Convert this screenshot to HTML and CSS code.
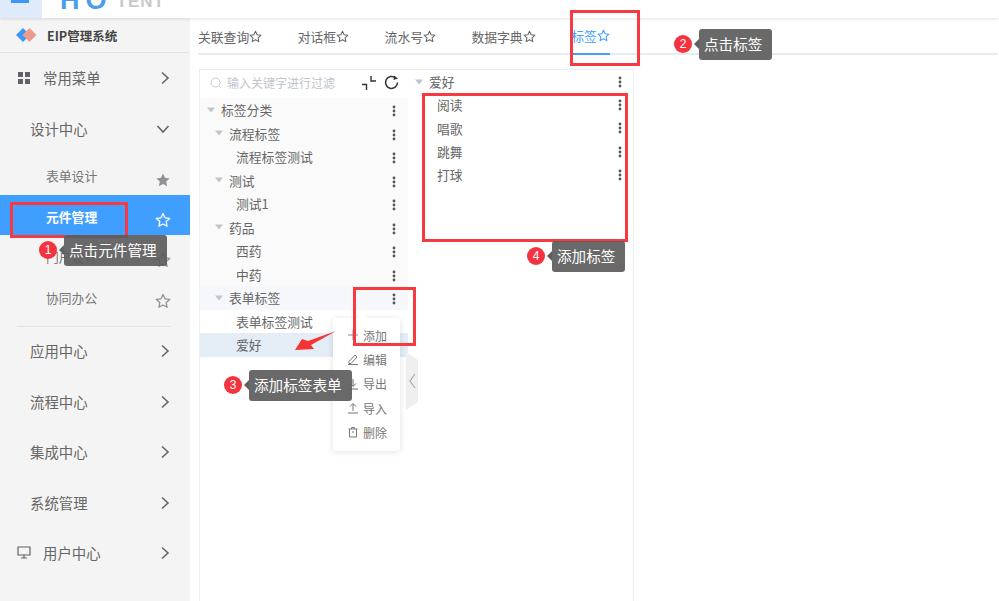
FILE: index.html
```html
<!DOCTYPE html>
<html lang="zh">
<head>
<meta charset="utf-8">
<title>EIP管理系统</title>
<link rel="stylesheet" href="styles.css">
</head>
<body>
<svg width="0" height="0" class="defs">
  <defs>
    <symbol id="dots" viewBox="0 0 4 12"><circle cx="2" cy="2" r="1.4"/><circle cx="2" cy="6" r="1.4"/><circle cx="2" cy="10" r="1.4"/></symbol>
    <symbol id="right" viewBox="0 0 10 14"><path d="M2 1.5 8 7l-6 5.500" fill="none" stroke="currentColor" stroke-width="1.600"/></symbol>
    <symbol id="down" viewBox="0 0 14 10"><path d="M1.500 2 7 8l5.500-6" fill="none" stroke="currentColor" stroke-width="1.600"/></symbol>
    <symbol id="star" viewBox="0 0 16 16"><path d="M8 1.500l2 4.300 4.700.6-3.500 3.200.9 4.700L8 12l-4.100 2.300.9-4.700L1.300 6.400 6 5.800z" fill="none" stroke="currentColor" stroke-width="1.300" stroke-linejoin="round"/></symbol>
    <symbol id="starfill" viewBox="0 0 16 16"><path d="M8 1.500l2 4.300 4.700.6-3.500 3.200.9 4.700L8 12l-4.100 2.300.9-4.700L1.300 6.400 6 5.800z" fill="currentColor"/></symbol>
    <symbol id="tri" viewBox="0 0 8 6"><path d="M0 .5h8L4 5.500z" fill="currentColor"/></symbol>
  </defs>
</svg>

<header class="topbar">
  <div class="burger"><span class="burger-line"></span></div>
  <div class="brand"><span class="brand-blue">HO</span><span class="brand-grey">TENT</span></div>
</header>

<div class="shell">
  <aside class="sidebar">
    <div class="sys">
      <svg class="sys-logo" width="22" height="16" viewBox="0 0 22 16"><path d="M8 1 15 8l-7 7-7-7z" fill="#3d98f5"/><path d="M14.500 1 21.500 8l-7 7-7-7z" fill="#ef9a8f"/></svg>
      <span class="sys-name">EIP管理系统</span>
    </div>
    <div class="top-row"><svg class="lead" width="12" height="12" viewBox="0 0 12 12"><path d="M0 0h5v5H0zM7 0h5v5H7zM0 7h5v5H0zM7 7h5v5H7z" fill="#5f6266"/></svg><span class="top-text">常用菜单</span><svg class="chev"><use href="#right"/></svg></div>
    <div class="top-row plain"><span class="top-text">设计中心</span><svg class="chev-d"><use href="#down"/></svg></div>
    <div class="sub-row first"><span>表单设计</span><svg class="sub-star"><use href="#starfill"/></svg></div>
    <div class="sub-row active"><span>元件管理</span><svg class="sub-star"><use href="#star"/></svg></div>
    <div class="sub-row"><span>门户设计</span><svg class="sub-star"><use href="#star"/></svg></div>
    <div class="sub-row"><span>协同办公</span><svg class="sub-star"><use href="#star"/></svg></div>
    <div class="side-rule"></div>
    <div class="top-row plain"><span class="top-text">应用中心</span><svg class="chev"><use href="#right"/></svg></div>
    <div class="top-row plain"><span class="top-text">流程中心</span><svg class="chev"><use href="#right"/></svg></div>
    <div class="top-row plain"><span class="top-text">集成中心</span><svg class="chev"><use href="#right"/></svg></div>
    <div class="top-row plain"><span class="top-text">系统管理</span><svg class="chev"><use href="#right"/></svg></div>
    <div class="top-row"><svg class="lead" width="14" height="13" viewBox="0 0 14 13"><path d="M1 1h12v8H1zM7 9v3M4 12h6" fill="none" stroke="#5f6266" stroke-width="1.200"/></svg><span class="top-text">用户中心</span><svg class="chev"><use href="#right"/></svg></div>
  </aside>

  <main class="main">
    <nav class="tabs">
      <span class="tab">关联查询<svg class="tab-star"><use href="#star"/></svg></span>
      <span class="tab">对话框<svg class="tab-star"><use href="#star"/></svg></span>
      <span class="tab">流水号<svg class="tab-star"><use href="#star"/></svg></span>
      <span class="tab">数据字典<svg class="tab-star"><use href="#star"/></svg></span>
      <span class="tab current">标签<svg class="tab-star"><use href="#star"/></svg></span>
    </nav>
    <section class="panels">
      <div class="left-panel">
        <div class="search">
          <svg class="search-icon" width="12" height="12" viewBox="0 0 12 12"><circle cx="5.500" cy="5.500" r="4.500" fill="none" stroke="#c6cad0"/><path d="M9 9l2 2" stroke="#c6cad0"/></svg>
          <span class="placeholder">输入关键字进行过滤</span>
          <svg class="tool" width="16" height="16" viewBox="0 0 16 16"><path d="M1 9.500h4.500V15M10 1v5h5" fill="none" stroke="#333" stroke-width="1.400"/></svg>
          <svg class="tool" width="17" height="17" viewBox="0 0 17 17"><path d="M14.500 8.500a6 6 0 1 1-2-4.500" fill="none" stroke="#333" stroke-width="1.500"/><path d="M11 1.500l4 3-4.500 1.500z" fill="#333"/></svg>
        </div>
        <div class="tree">
          <div class="node lv0"><svg class="tri"><use href="#tri"/></svg><span class="label">标签分类</span><svg class="dots"><use href="#dots"/></svg></div>
          <div class="node lv1"><svg class="tri"><use href="#tri"/></svg><span class="label">流程标签</span><svg class="dots"><use href="#dots"/></svg></div>
          <div class="node lv2"><span class="label">流程标签测试</span><svg class="dots"><use href="#dots"/></svg></div>
          <div class="node lv1"><svg class="tri"><use href="#tri"/></svg><span class="label">测试</span><svg class="dots"><use href="#dots"/></svg></div>
          <div class="node lv2"><span class="label">测试1</span><svg class="dots"><use href="#dots"/></svg></div>
          <div class="node lv1"><svg class="tri"><use href="#tri"/></svg><span class="label">药品</span><svg class="dots"><use href="#dots"/></svg></div>
          <div class="node lv2"><span class="label">西药</span><svg class="dots"><use href="#dots"/></svg></div>
          <div class="node lv2"><span class="label">中药</span><svg class="dots"><use href="#dots"/></svg></div>
          <div class="node lv1 hover"><svg class="tri"><use href="#tri"/></svg><span class="label">表单标签</span><svg class="dots"><use href="#dots"/></svg></div>
          <div class="node lv2 plain-node"><span class="label">表单标签测试</span></div>
          <div class="node lv2 selected"><span class="label">爱好</span></div>
        </div>
      </div>
      <div class="right-panel">
        <div class="rnode r-head"><svg class="tri"><use href="#tri"/></svg><span class="label">爱好</span><svg class="dots"><use href="#dots"/></svg></div>
        <div class="rnode r-item"><span class="label">阅读</span><svg class="dots"><use href="#dots"/></svg></div>
        <div class="rnode r-item"><span class="label">唱歌</span><svg class="dots"><use href="#dots"/></svg></div>
        <div class="rnode r-item"><span class="label">跳舞</span><svg class="dots"><use href="#dots"/></svg></div>
        <div class="rnode r-item"><span class="label">打球</span><svg class="dots"><use href="#dots"/></svg></div>
      </div>
    </section>
  </main>
</div>

<div class="handle"><svg width="12" height="58" viewBox="0 0 12 58"><path d="M0 0l12 8v42L0 58z" fill="#efefef"/><path d="M9 22l-5 7 5 7" fill="none" stroke="#a8abb0" stroke-width="1.200"/></svg></div>

<div class="menu">
  <span class="menu-notch"></span>
  <div class="menu-item"><svg width="12" height="12" viewBox="0 0 12 12"><path d="M6 1v10M1 6h10" stroke="#888" fill="none"/></svg><span>添加</span></div>
  <div class="menu-item"><svg width="12" height="12" viewBox="0 0 12 12"><path d="M2 8.500 8 2l2 2-6 6.500H2zM1 11.500h10" stroke="#777" fill="none"/></svg><span>编辑</span></div>
  <div class="menu-item"><svg width="12" height="12" viewBox="0 0 12 12"><path d="M6 1v7M3 5.500l3 3 3-3M1 11h10" stroke="#666" fill="none"/></svg><span>导出</span></div>
  <div class="menu-item"><svg width="12" height="12" viewBox="0 0 12 12"><path d="M6 9V2M3 4.500l3-3 3 3M1 11h10" stroke="#777" fill="none"/></svg><span>导入</span></div>
  <div class="menu-item"><svg width="12" height="12" viewBox="0 0 12 12"><path d="M1.500 3h9M4.500 3V1.500h3V3M2.500 3v8h7V3M5 6h2" stroke="#777" fill="none"/></svg><span>删除</span></div>
</div>

<div class="mark mark-1"></div>
<div class="mark mark-2"></div>
<div class="mark mark-3"></div>
<div class="mark mark-4"></div>

<svg class="arrow" width="44" height="24" viewBox="0 0 44 24"><path d="M43 1 15 11 9 9 2 20l19-1-3-4z" fill="#f33535"/></svg>

<div class="note note-1"><span class="badge">1</span><span class="tip">点击元件管理</span></div>
<div class="note note-2"><span class="badge">2</span><span class="tip">点击标签</span></div>
<div class="note note-3"><span class="badge">3</span><span class="tip">添加标签表单</span></div>
<div class="note note-4"><span class="badge">4</span><span class="tip">添加标签</span></div>
</body>
</html>
```

FILE: styles.css
```css
* { box-sizing: border-box; }
html, body { margin: 0; height: 100%; overflow: hidden; background: #fff; }
body { width: 999px; height: 601px; position: relative; font-family: "Noto Sans CJK SC", "Liberation Sans", sans-serif; color: #555; }
.defs { position: absolute; }

.topbar { height: 18px; display: flex; background: #fff; overflow: hidden; box-shadow: 0 1px 3px rgba(0,0,0,.12); position: relative; }
.burger { width: 42px; height: 18px; background: #dfeafb; position: relative; }
.burger-line { display: block; position: absolute; left: 11px; top: 0; width: 18px; height: 3px; background: #3d96f5; }
.brand { margin-left: 18px; height: 9px; display: flex; align-items: flex-end; font-family: "Liberation Sans", sans-serif; font-weight: 700; white-space: nowrap; }
.brand-blue { color: #4a9cf0; font-size: 27px; line-height: 27px; letter-spacing: 6px; margin-bottom: -5px; }
.brand-grey { color: #c9c9c9; font-size: 17px; line-height: 17px; letter-spacing: 1px; margin-left: 4px; margin-bottom: -1px; }

.shell { display: flex; height: 583px; }
.sidebar { width: 190px; flex: none; background: #f4f4f4; }
.sys { height: 35px; margin-right: 1px; display: flex; align-items: center; padding-left: 15px; border-bottom: 1px solid #e2e2e2; }
.sys-name { margin-left: 10px; font-size: 12.500px; font-weight: 700; color: #444; }
.top-row { height: 50.500px; display: flex; align-items: center; padding: 0 0 1.500px 17px; position: relative; }
.top-row.plain { padding-left: 30px; }
.lead { flex: none; width: 14px; }
.top-text { font-size: 14.400px; color: #666; margin-left: 12px; }
.top-row.plain .top-text { margin-left: 0; }
.chev { position: absolute; left: 160px; top: 18px; width: 10px; height: 14px; color: #666; }
.chev-d { position: absolute; left: 156px; top: 20px; width: 14px; height: 10px; color: #666; }
.sub-row { height: 40.500px; padding: 3px 0 0 46px; display: flex; align-items: center; font-size: 12.800px; color: #777; position: relative; }
.sub-row.first { height: 41px; padding-top: 2px; }
.sub-row.active { background: #409eff; color: #fff; font-weight: 700; height: 40px; }
.sub-star { position: absolute; left: 155px; top: 17px; width: 16px; height: 16px; color: #8f9296; }
.first .sub-star { top: 18px; }
.active .sub-star { color: #fff; }
.side-rule { height: 1px; margin: 10px 19px -1px 17px; background: #e4e4e4; }

.main { flex: 1; padding: 0 0 0 9px; }
.tabs { height: 37px; width: 800px; display: flex; gap: 35.500px; margin-left: -1px; border-bottom: 2px solid #e8ecf1; font-size: 12.800px; color: #666; }
.tab { height: 37px; display: flex; align-items: center; white-space: nowrap; }
.tab.current { color: #409eff; border-bottom: 2px solid #409eff; }
.tab-star { width: 13px; height: 13px; flex: none; }

.panels { margin-top: 14px; display: flex; width: 435px; height: 540px; border-top: 1px solid #edeff2; border-left: 1px solid #edeff2; border-right: 1px solid #edeff2; }
.left-panel { width: 208px; flex: none; }
.search { height: 28px; display: flex; align-items: center; padding: 0 0 3px 10px; }
.placeholder { font-size: 12px; color: #c0c4cc; margin-left: 5px; width: 134px; white-space: nowrap; }
.tool { flex: none; }
.tool + .tool { margin-left: 6px; }
.tree { background: #fafafa; }
.node { height: 23.500px; display: flex; align-items: center; font-size: 12.800px; color: #666; position: relative; }
.rnode { height: 23.400px; display: flex; align-items: center; font-size: 12.800px; color: #666; position: relative; }
.label { white-space: nowrap; }
.tri { width: 8px; height: 6px; color: #c0c4cc; flex: none; margin-right: 6px; }
.lv0 { padding-left: 7px; }
.lv1 { padding-left: 15px; }
.lv2 { padding-left: 36px; }
.dots { position: absolute; left: 192px; top: 7px; width: 4px; height: 12px; fill: #555; }
.hover { background: #f5f7fa; }
.plain-node { background: #fff; }
.selected { background: #e4ecf5; }
.right-panel { flex: 1; }
.r-head { height: 23px; padding-left: 7px; }
.r-item { padding-left: 29px; }
.rnode .dots { left: 210px; top: 6px; }

.handle { position: absolute; left: 406px; top: 352px; width: 12px; height: 58px; }
.handle svg { display: block; }

.menu { position: absolute; left: 333px; top: 318px; width: 67px; height: 133px; padding-top: 5px; background: #fff; border-radius: 3px; box-shadow: 0 1px 6px rgba(0,0,0,.12); }
.menu-notch { position: absolute; left: 25px; top: -5px; width: 0; height: 0; border: 5px solid transparent; border-top: 0; border-bottom-color: #fff; }
.menu-item { height: 24.300px; display: flex; align-items: center; gap: 4px; padding-left: 14px; font-size: 12px; color: #777; }
.menu-item svg { flex: none; }

.mark { position: absolute; border: 3px solid #f73a3f; }
.mark-1 { left: 10px; top: 202px; width: 118px; height: 36px; }
.mark-2 { left: 570px; top: 10px; width: 70px; height: 56px; }
.mark-3 { left: 353px; top: 287px; width: 63px; height: 59px; }
.mark-4 { left: 422px; top: 93px; width: 206px; height: 149px; }

.arrow { position: absolute; left: 293px; top: 330px; }

.note { position: absolute; display: flex; align-items: center; }
.note-1 { left: 39px; top: 235px; }
.note-2 { left: 674px; top: 29px; }
.note-3 { left: 224px; top: 370px; }
.note-4 { left: 527px; top: 241px; }
.badge { width: 18px; height: 18px; border-radius: 50%; background: #f5333f; color: #fff; font: 12px/18px "Liberation Sans", sans-serif; text-align: center; margin-right: 7px; flex: none; }
.tip { height: 30.500px; line-height: 30px; padding: 0 10px 0 5px; background: rgba(92,92,92,.92); color: #fff; font-size: 14.600px; border-radius: 3px; white-space: nowrap; position: relative; }
.tip::before { content: ""; position: absolute; left: -5px; top: 10px; border: 5px solid transparent; border-left: 0; border-right-color: #5f5f5f; }
```
